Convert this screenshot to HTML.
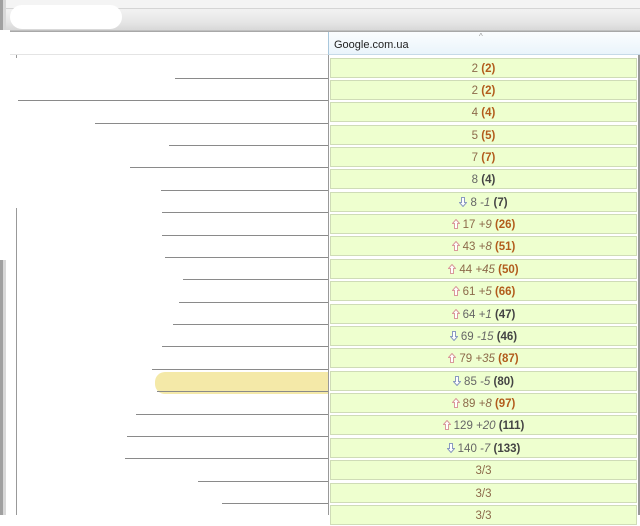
<!DOCTYPE html>
<html><head><meta charset="utf-8"><style>
*{margin:0;padding:0;box-sizing:border-box}
body{width:640px;height:515px;overflow:hidden;background:#fff;font-family:"Liberation Sans",sans-serif;font-size:11px;position:relative}
.a{position:absolute}
.top{left:0;top:0;width:640px;height:32px;background:linear-gradient(#f4f4f4 0,#f4f4f4 8px,#b8b8b8 8px,#f2f2f2 9px,#e6e6e6 22px,#d8d8d8 30px,#a8a8a8 31px)}
.hdr{left:328px;top:32px;width:312px;height:23px;background:linear-gradient(#fbfdff,#eaf4fb);border-left:1px solid #a9c7dc;border-bottom:1px solid #c6dae8;color:#222;padding:7px 0 0 5px}
.hl{left:0;top:32px;width:328px;height:23px;background:#fff;border-bottom:1px solid #e4e4e4}
.cell{left:330px;width:307px;height:20px;background:#eeffcf;border:1px solid #cfdcb7;text-align:center;line-height:20px;color:#8c6a4a;font-size:11.5px}
.cell b{color:#b25c1c}
.g{color:#666}
.g b{color:#444}
.line{height:1px;background:#8a8a8a}
i{font-style:italic}
.up,.dn{display:inline-block;width:8px;height:10px;vertical-align:-1px;margin-right:3px}
</style></head><body>
<div class="a top"></div>
<div class="a" style="left:10px;top:5px;width:112px;height:24px;background:#fff;border-radius:12px"></div>
<div class="a hl"></div>
<div class="a hdr">Google.com.ua<span class="a" style="left:150px;top:0;font-size:8px;color:#999">^</span></div>
<div class="a" style="left:0;top:0;width:3px;height:515px;background:#a0a0a0"></div>
<div class="a" style="left:3px;top:0;width:3px;height:515px;background:#d8d8d8"></div>
<div class="a" style="left:0;top:30px;width:10px;height:230px;background:#fff"></div>
<div class="a" style="left:16px;top:55px;width:1px;height:460px;background:#999"></div>
<div class="a" style="left:0;top:58px;width:30px;height:150px;background:#fff"></div>
<div class="a" style="left:328px;top:55px;width:1px;height:460px;background:#999"></div>
<div class="a" style="left:638px;top:55px;width:2px;height:460px;background:#999"></div>
<div class="a" style="left:155px;top:372px;width:173px;height:22px;background:#f4e9a8;border-radius:10px 0 0 10px"></div>
<div id="rows"></div>
<script>
var starts=[175,18,95,169,130,161,162,162,165,183,179,173,162,152,157,136,127,125,198,222];
var up='<svg class="up" viewBox="0 0 8 10"><path d="M4 .5L7.5 4.5H5.5V9.5H2.5V4.5H.5Z" fill="#fff" stroke="#d99a9a"/></svg>';
var dn='<svg class="dn" viewBox="0 0 8 10"><path d="M4 9.5L7.5 5.5H5.5V.5H2.5V5.5H.5Z" fill="#fff" stroke="#8a9ac0"/></svg>';
var d=[["","2","","2",0],["","2","","2",0],["","4","","4",0],["","5","","5",0],["","7","","7",0],["","8","","4",1],[dn,"8","-1","7",1],[up,"17","+9","26",0],[up,"43","+8","51",0],[up,"44","+45","50",0],[up,"61","+5","66",0],[up,"64","+1","47",1],[dn,"69","-15","46",1],[up,"79","+35","87",0],[dn,"85","-5","80",1],[up,"89","+8","97",0],[up,"129","+20","111",1],[dn,"140","-7","133",1],["3/3"],["3/3"],["3/3"]];
var h='';
for(var k=0;k<21;k++){var t=57.5+k*22.37;var r=d[k];var s;
if(r.length==1)s=r[0];else s=r[0]+r[1]+' '+(r[2]?'<i>'+r[2]+'</i> ':'')+'<b>('+r[3]+')</b>';
h+='<div class="a cell'+(r[4]?' g':'')+'" style="top:'+Math.round(t)+'px">'+s+'</div>';
if(k<20){var st=starts[k];h+='<div class="a line" style="top:'+Math.round(t+20.5)+'px;left:'+st+'px;width:'+(328-st)+'px"></div>';}}
document.getElementById('rows').innerHTML=h;
</script>
</body></html>
